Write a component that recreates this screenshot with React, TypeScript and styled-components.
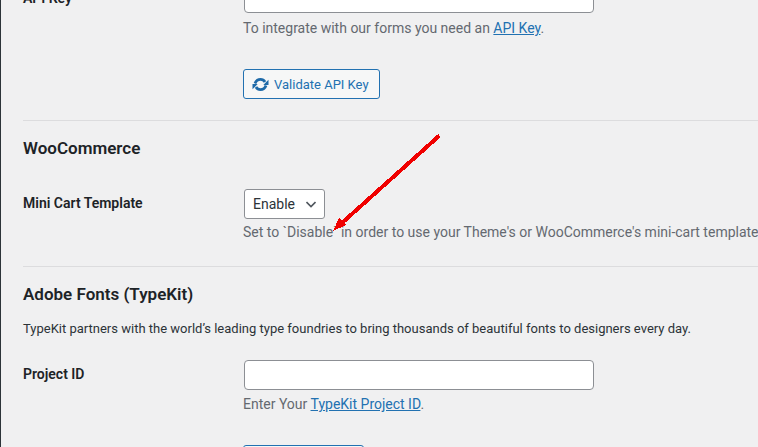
import React, {FunctionComponent, ReactElement} from "react";
import styled, {createGlobalStyle} from "styled-components";

const GlobalStyle = createGlobalStyle`
  html, body {
    margin: 0;
    padding: 0;
    background: #f0f0f1;
  }
  body {
    font-family: Roboto, "Liberation Sans", sans-serif;
    color: #1d2327;
  }
`;

const Page = styled.div`
  position: relative;
  width: 758px;
  height: 447px;
  overflow: hidden;
  background: #f0f0f1;
  border-left: 1px solid #2c3338;
  box-sizing: border-box;
`;

const Content = styled.div`
  margin-top: -17px;
  padding-left: 22px;
  width: 800px;
`;

const Section = styled.section<{$divider?: boolean}>`
  margin-right: 65px;
  border-bottom: ${p => p.$divider ? "1px solid #dcdcde" : "none"};
`;

const Heading = styled.h2`
  margin: 0;
  font-size: 17px;
  font-weight: 600;
  line-height: 20px;
  color: #1d2327;
`;

const Intro = styled.p`
  margin: 0;
  font-size: 13px;
  line-height: 20px;
  color: #2c3338;
`;

const Row = styled.div`
  display: grid;
  grid-template-columns: 221px 1fr;
`;

const Label = styled.label`
  font-size: 14px;
  font-weight: 600;
  line-height: 18px;
  color: #1d2327;
`;

const Field = styled.div`
  display: flex;
  flex-direction: column;
  align-items: flex-start;
`;

const TextInput = styled.input`
  box-sizing: border-box;
  width: 350px;
  height: 30px;
  margin: 0;
  padding: 0 8px;
  background: #fff;
  border: 1px solid #8c8f94;
  border-radius: 4px;
`;

const Description = styled.p`
  margin: 5px 0 0 -1px;
  font-size: 14px;
  line-height: 20px;
  color: #646970;
  white-space: nowrap;
`;

const DocLink = styled.a`
  color: #2271b1;
  text-decoration: underline;
`;

const Button = styled.button`
  display: flex;
  align-items: center;
  gap: 5px;
  box-sizing: border-box;
  height: 30px;
  margin-left: -1px;
  padding: 0 10px 0 8px;
  background: #f6f7f7;
  border: 1px solid #2271b1;
  border-radius: 3px;
  font-family: inherit;
  font-size: 13px;
  color: #2271b1;
`;

const SelectBox = styled.div`
  display: flex;
  align-items: center;
  justify-content: space-between;
  box-sizing: border-box;
  width: 81px;
  height: 30px;
  padding: 0 8px;
  background: #fff;
  border: 1px solid #8c8f94;
  border-radius: 3px;
  font-size: 14px;
  color: #2c3338;
`;

const Arrow = styled.svg`
  position: absolute;
  left: 0;
  top: 0;
  pointer-events: none;
`;

const RefreshIcon: FunctionComponent = (): ReactElement => (
    <svg width="17" height="17" viewBox="0 0 17 17" fill="none">
        <path d="M3 7.500 C4 4.800 6.200 3.400 8.500 3.400 C10.500 3.400 12 4.300 13 6" stroke="#1e6aa8" strokeWidth="2.800" />
        <path d="M14 9.500 C13 12.200 10.800 13.600 8.500 13.600 C6.500 13.600 5 12.700 4 11" stroke="#1e6aa8" strokeWidth="2.800" />
        <path d="M16.500 3.800 V9 H11.300 Z" fill="#1e6aa8" />
        <path d="M0.500 13.200 V8 H5.700 Z" fill="#1e6aa8" />
    </svg>
);

const Chevron: FunctionComponent = (): ReactElement => (
    <svg width="10" height="7" viewBox="0 0 10 7" fill="none" stroke="#50575e" strokeWidth="1.600">
        <path d="M0.500 1 L5 5.500 L9.500 1" />
    </svg>
);

const App: FunctionComponent = (): ReactElement => {
    return (
        <Page>
            <GlobalStyle />
            <Content>
                <Section $divider style={{paddingBottom: 21}}>
                    <Row>
                        <Label style={{paddingTop: 6}}>API Key</Label>
                        <Field>
                            <TextInput />
                            <Description>
                                To integrate with our forms you need an <DocLink href="#">API Key</DocLink>.
                            </Description>
                            <div style={{height: 31}} />
                            <Button>
                                <RefreshIcon />
                                Validate API Key
                            </Button>
                        </Field>
                    </Row>
                </Section>

                <Section $divider style={{paddingTop: 17, paddingBottom: 24}}>
                    <Heading>WooCommerce</Heading>
                    <Row style={{marginTop: 31}}>
                        <Label style={{paddingTop: 5}}>Mini Cart Template</Label>
                        <Field>
                            <SelectBox>
                                Enable
                                <Chevron />
                            </SelectBox>
                            <Description style={{marginTop: 3}}>
                                Set to `Disable` in order to use your Theme's or WooCommerce's mini-cart template
                            </Description>
                        </Field>
                    </Row>
                </Section>

                <Section style={{paddingTop: 17}}>
                    <Heading>Adobe Fonts (TypeKit)</Heading>
                    <Intro style={{marginTop: 15}}>
                        TypeKit partners with the world’s leading type foundries to bring thousands of beautiful fonts to designers every day.
                    </Intro>
                    <Row style={{marginTop: 21}}>
                        <Label style={{paddingTop: 5}}>Project ID</Label>
                        <Field>
                            <TextInput />
                            <Description style={{marginTop: 4}}>
                                Enter Your <DocLink href="#">TypeKit Project ID</DocLink>.
                            </Description>
                            <div style={{height: 31}} />
                            <Button style={{width: 121}} />
                        </Field>
                    </Row>
                </Section>
            </Content>

            <Arrow width="758" height="447" viewBox="0 0 758 447" shapeRendering="crispEdges">
                <path d="M438.500 135.500 L342 222" stroke="#f00000" strokeWidth="4" fill="none" />
                <path d="M332 231 L338 218 L345 225 Z" fill="#f00000" />
            </Arrow>
        </Page>
    );
};

export default App;
